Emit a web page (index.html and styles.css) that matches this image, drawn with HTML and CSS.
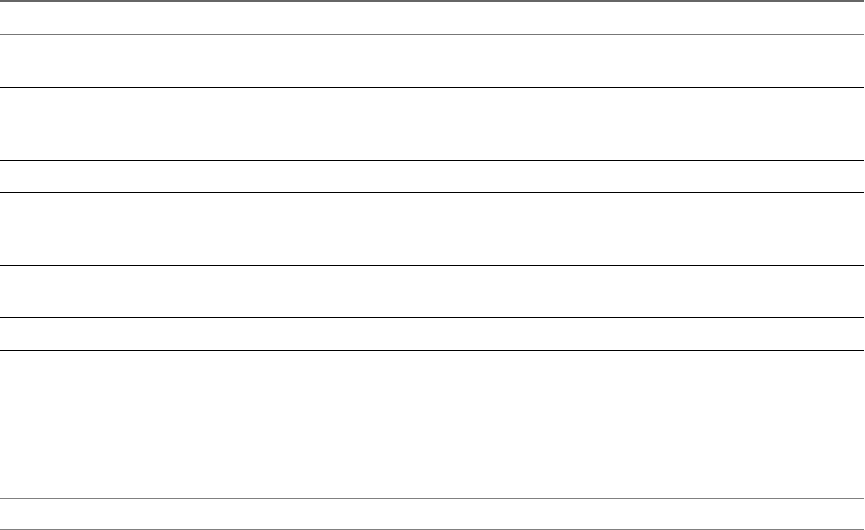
FILE: index.html
```html
<!DOCTYPE html>
<html>
<head>
<meta charset="utf-8">
<link rel="stylesheet" href="styles.css">
</head>
<body>
<div class="table">
  <div class="row r1"></div>
  <div class="row r2"></div>
  <div class="row r3"></div>
  <div class="row r4"></div>
  <div class="row r5"></div>
  <div class="row r6"></div>
  <div class="row r7"></div>
  <div class="row r8"></div>
  <div class="row r9"></div>
</div>
</body>
</html>
```
FILE: styles.css
```css
html, body {
  margin: 0;
  padding: 0;
  background: #fff;
  font-family: "Liberation Sans", Arial, sans-serif;
}
.table {
  width: 864px;
  display: flex;
  flex-direction: column;
  border-top: 2px solid #666;
}
.row {
  flex: none;
  border-bottom: 1px solid #000;
}
.r1 { height: 32px; border-bottom-color: #777; }
.r2 { height: 52px; }
.r3 { height: 72px; }
.r4 { height: 31px; }
.r5 { height: 72px; }
.r6 { height: 51px; }
.r7 { height: 32px; }
.r8 { height: 147px; border-bottom-color: #808080; }
.r9 { height: 30px; border-bottom-color: #808080; }
```
